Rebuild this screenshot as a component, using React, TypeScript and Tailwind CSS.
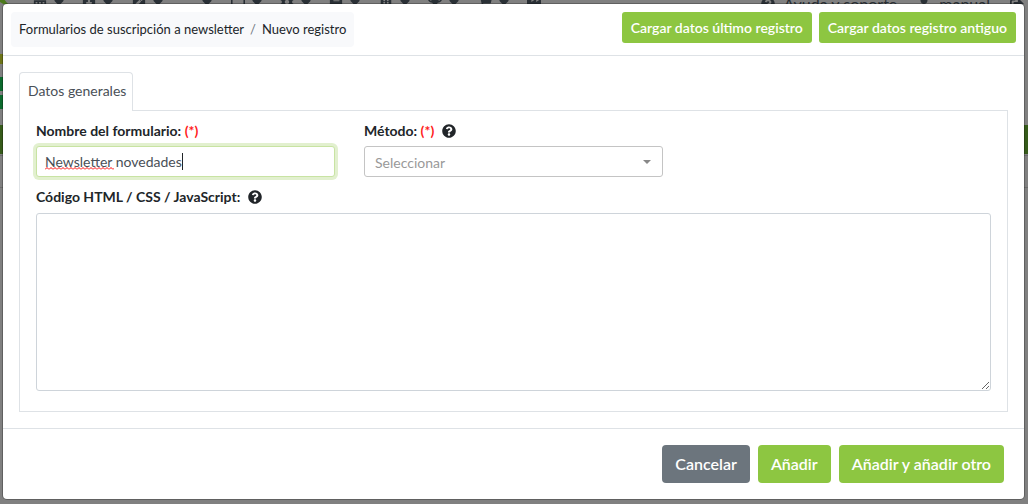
import { useState } from 'react';
import {
  FaBook,
  FaBuilding,
  FaCalendarAlt,
  FaCaretDown,
  FaCog,
  FaDesktop,
  FaFacebookSquare,
  FaIndustry,
  FaPenSquare,
  FaQuestionCircle,
  FaShoppingCart,
  FaSignOutAlt,
  FaTrophy,
  FaUser,
  FaWindowMinimize,
} from 'react-icons/fa';

const navIcons = [
  { icon: FaCalendarAlt, caret: true },
  { icon: FaFacebookSquare, caret: true },
  { icon: FaPenSquare, caret: true },
  { icon: FaWindowMinimize, caret: true },
  { icon: FaDesktop, caret: true },
  { icon: FaCog, caret: true },
  { icon: FaBook, caret: true },
  { icon: FaBuilding, caret: true },
  { icon: FaTrophy, caret: true },
  { icon: FaShoppingCart, caret: true },
  { icon: FaIndustry, caret: false },
];

function PageBehind() {
  return (
    <div aria-hidden="true" className="absolute inset-0 overflow-hidden bg-[#808080] text-[#2a3036]">
      <div className="flex h-1 items-start justify-between overflow-hidden pr-1">
        <div className="flex h-1 items-center">
          <svg width="8" height="8" viewBox="0 0 8 8" className="mr-[25px]">
            <path d="M0 0h3l5 6-3 1-5-3z" fill="#4c7a1c" />
          </svg>
          <div className="flex w-[508px] shrink-0 items-center justify-between">
            {navIcons.map(({ icon: Icon, caret }, i) => (
              <span key={i} className="flex items-center gap-1">
                <Icon size={14} />
                {caret && <FaCaretDown size={16} />}
              </span>
            ))}
          </div>
        </div>
        <div className="flex h-2 items-center gap-5 text-base leading-4">
          <span className="flex items-center gap-2"><FaQuestionCircle size={14} />Ayuda y soporte</span>
          <span className="flex items-center gap-2"><FaUser size={14} />manual</span>
          <FaSignOutAlt size={14} />
        </div>
      </div>
      <div className="mt-[50px] h-[10px] w-1 bg-[#6d7418]" />
      <div className="mt-[13px] h-[14px] w-1 bg-[#0b6a2d]" />
      <div className="mt-1 h-[14px] w-1 bg-[#0b6a2d]" />
      <div className="mt-4 h-[29px] bg-[#365b1a]" />
      <div className="mt-[1px] h-[33px] border-y border-[#6c6c6c]" />
    </div>
  );
}

function Required() {
  return <span className="text-[#ff1a1a]">(*)</span>;
}

export default function App() {
  const [name, setName] = useState('Newsletter novedades');
  const [method, setMethod] = useState('');
  const [code, setCode] = useState('');
  const untouched = name === 'Newsletter novedades';

  return (
    <div className="relative min-h-screen px-[3px] pt-1 pb-[5px] font-['Lato',sans-serif] text-sm text-[#212529]">
      <PageBehind />
      <div role="dialog" aria-label="Nuevo registro" className="relative mr-px rounded bg-white shadow-[0_0_0_1px_rgba(0,0,0,0.25)]">
        <header className="flex items-start justify-between border-b border-[#dee2e6] p-2">
          <nav aria-label="breadcrumb" className="rounded bg-[#f8f9fb] px-2 py-[7px]">
            <ol className="flex gap-[6px] text-[13px] leading-[21px]">
              <li><a href="#formularios">Formularios de suscripción a newsletter</a></li>
              <li aria-hidden="true" className="text-[#6c757d]">/</li>
              <li>Nuevo registro</li>
            </ol>
          </nav>
          <div className="flex gap-[7px]">
            <button type="button" className="h-[31px] rounded-[3px] bg-[#8dc641] px-[9px] text-sm font-semibold text-white">Cargar datos último registro</button>
            <button type="button" className="h-[31px] rounded-[3px] bg-[#8dc641] px-[9px] text-sm font-semibold text-white">Cargar datos registro antiguo</button>
          </div>
        </header>

        <form id="registro" onSubmit={(e) => e.preventDefault()} className="p-4">
          <div role="tablist" className="flex">
            <button type="button" role="tab" aria-selected="true" className="relative z-10 -mb-px h-[39px] rounded-t border border-b-0 border-[#dee2e6] bg-white pr-[6px] pb-[2px] pl-2 text-sm text-[#495057]">
              Datos generales
            </button>
          </div>
          <div role="tabpanel" className="border border-[#dee2e6] px-4 pt-[9px] pb-5">
            <div className="grid grid-cols-3 gap-[29px]">
              <div>
                <label htmlFor="nombre" className="block h-[26px] leading-[21px] font-bold">Nombre del formulario: <Required /></label>
                <div className="relative">
                  <input
                    id="nombre"
                    type="text"
                    spellCheck={false}
                    value={name}
                    onChange={(e) => setName(e.target.value)}
                    className="block h-[31px] w-full rounded-[3px] border border-[#c8e3a3] bg-white px-2 text-sm text-[#495057] shadow-[0_0_0_3px_#e2f0cf] outline-none"
                  />
                  {untouched && (
                    <>
                      <svg aria-hidden="true" width="69" height="3" className="pointer-events-none absolute top-[21px] left-[9px]">
                        <defs>
                          <pattern id="wave" width="4" height="3" patternUnits="userSpaceOnUse">
                            <path d="M0 2.5 2 .5 4 2.5" fill="none" stroke="#f00" strokeWidth="1" />
                          </pattern>
                        </defs>
                        <rect width="69" height="3" fill="url(#wave)" />
                      </svg>
                      <span className="pointer-events-none absolute top-[7px] left-[146px] h-[17px] w-px bg-[#212529]" />
                    </>
                  )}
                </div>
              </div>
              <div>
                <div className="flex h-[26px] items-start gap-2 leading-[21px]">
                  <label htmlFor="metodo" className="font-bold">Método: <Required /></label>
                  <FaQuestionCircle size={14} className="mt-1" />
                </div>
                <div className="relative">
                  <select
                    id="metodo"
                    value={method}
                    onChange={(e) => setMethod(e.target.value)}
                    className="block h-[31px] w-full appearance-none rounded-[3px] border border-[#c4c4c4] bg-white px-[10px] pt-[2px] text-sm text-[#999] outline-none"
                  >
                    <option value="">Seleccionar</option>
                    <option value="post">POST</option>
                    <option value="get">GET</option>
                  </select>
                  <span className="pointer-events-none absolute top-[14px] right-3 border-x-4 border-t-4 border-x-transparent border-t-[#888]" />
                </div>
              </div>
            </div>
            <div className="mt-[9px]">
              <div className="flex h-[27px] items-start gap-2 leading-[21px]">
                <label htmlFor="codigo" className="font-bold">Código HTML / CSS / JavaScript:</label>
                <FaQuestionCircle size={14} className="mt-1" />
              </div>
              <textarea
                id="codigo"
                value={code}
                onChange={(e) => setCode(e.target.value)}
                className="block h-[178px] w-full resize rounded-[3px] border border-[#ced4da] bg-white px-2 py-1 text-sm outline-none"
              />
            </div>
          </div>
        </form>

        <footer className="flex justify-end gap-2 border-t border-[#dee2e6] py-4 pr-5 pl-4">
          <button type="button" className="h-[38px] rounded bg-[#6c757d] px-[13px] text-base font-semibold text-white">Cancelar</button>
          <button type="submit" form="registro" className="h-[38px] rounded bg-[#8dc641] px-[13px] text-base font-semibold text-white">Añadir</button>
          <button type="submit" form="registro" className="h-[38px] rounded bg-[#8dc641] px-[13px] text-base font-semibold text-white">Añadir y añadir otro</button>
        </footer>
      </div>
    </div>
  );
}
